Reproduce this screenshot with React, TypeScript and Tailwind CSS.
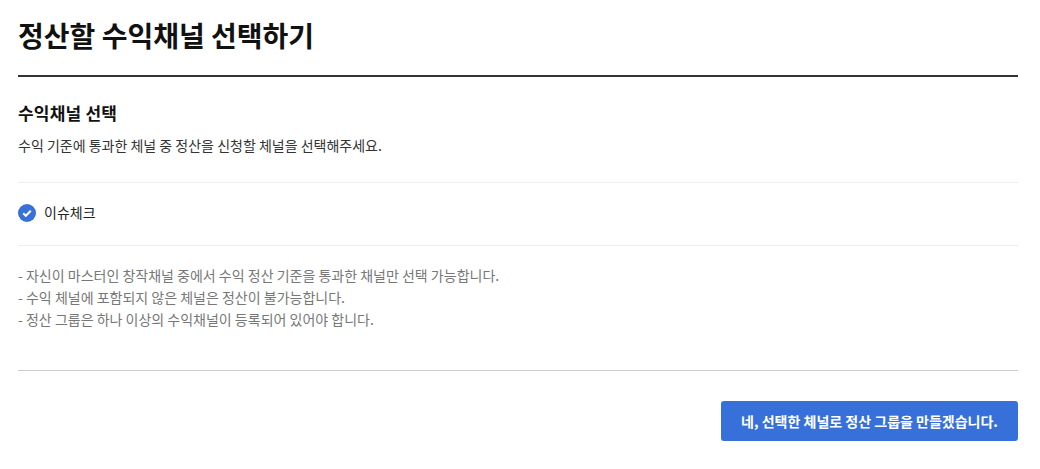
const notes = [
  '- 자신이 마스터인 창작채널 중에서 수익 정산 기준을 통과한 채널만 선택 가능합니다.',
  '- 수익 체널에 포함되지 않은 체널은 정산이 불가능합니다.',
  '- 정산 그룹은 하나 이상의 수익채널이 등록되어 있어야 합니다.',
];

export default function App() {
  return (
    <div className="w-[1040px] h-[469px] overflow-hidden bg-white pl-[18px] pr-[22px] font-['Noto_Sans_CJK_KR','Noto_Sans',sans-serif]">
      <h1 className="h-[77px] border-b-2 border-[#333] pt-[15px] text-[28px] leading-[41px] font-bold text-[#111]">
        정산할 수익채널 선택하기
      </h1>
      <h2 className="mt-[23px] text-[17px] tracking-[0.2px] leading-[25px] font-bold text-[#111]">수익채널 선택</h2>
      <p className="mt-[10px] text-[14px] leading-[20px] text-[#333]">
        수익 기준에 통과한 체널 중 정산을 신청할 체널을 선택해주세요.
      </p>
      <div className="mt-[27px] flex h-[64px] items-center gap-2 border-y border-[#eee] pb-[2px]">
        <svg viewBox="0 0 18 18" className="size-[18px]">
          <circle cx="9" cy="9" r="9" fill="#3870d9" />
          <path d="M5.2 9.2l2.6 2.6L12.8 6.8" fill="none" stroke="#fff" strokeWidth="2" />
        </svg>
        <span className="pb-[2px] text-[14px] text-[#222]">이슈체크</span>
      </div>
      <ul className="mt-[18px] text-[14px] leading-[22px] text-[#777]">
        {notes.map((note) => (
          <li key={note}>{note}</li>
        ))}
      </ul>
      <div className="mt-[40px] border-t border-[#ccc]" />
      <div className="mt-[30px] flex justify-end">
        <button className="h-[40px] w-[297px] rounded-[3px] bg-[#3870d9] text-[14px] font-bold text-white">
          네, 선택한 체널로 정산 그룹을 만들겠습니다.
        </button>
      </div>
    </div>
  );
}
